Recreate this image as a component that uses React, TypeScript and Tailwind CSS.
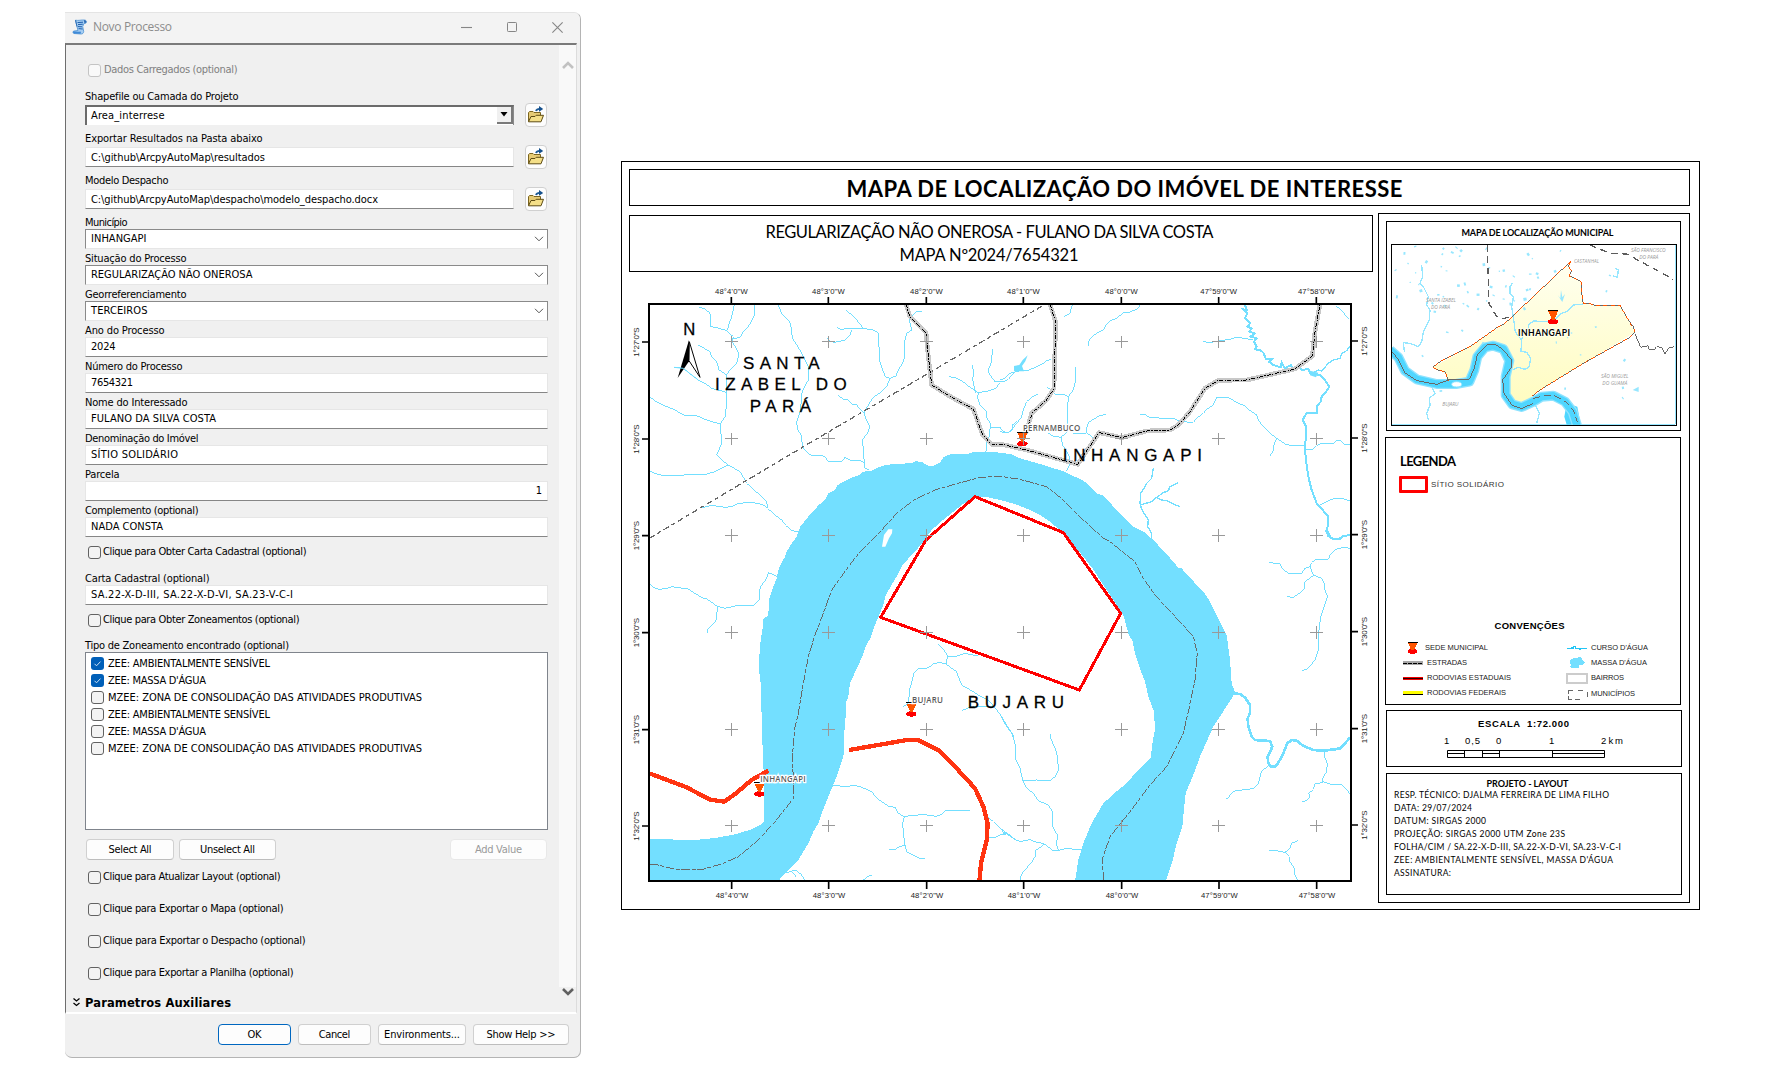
import { useLayoutEffect, useRef, useState } from "react";
import type { ReactNode } from "react";

const UI = "font-['DejaVu_Sans_Condensed','DejaVu_Sans',sans-serif]";
const CALIBRI = "font-['Lato',sans-serif]";
const ARIAL = "font-['Liberation_Sans',sans-serif]";

/* Single line of text whose tracking is adjusted so that it spans `w` pixels. */
function Fit({ w, children, className = "" }: { w: number; children: string; className?: string }) {
  const ref = useRef<HTMLSpanElement>(null);
  const [ls, setLs] = useState(0);
  useLayoutEffect(() => {
    const el = ref.current;
    if (!el) return;
    el.style.letterSpacing = "0px";
    el.style.marginRight = "0px";
    const natural = el.getBoundingClientRect().width;
    const next = children.length > 1 ? (w - natural) / (children.length - 1) : 0;
    el.style.letterSpacing = `${next}px`;
    el.style.marginRight = `${-next}px`;
    setLs(next);
  }, [w, children]);
  return (
    <span
      ref={ref}
      className={`inline-block shrink-0 whitespace-pre ${className}`}
      style={{ letterSpacing: `${ls}px`, marginRight: `${-ls}px` }}
    >
      {children}
    </span>
  );
}

/* ---------- Dialog ---------- */

function Box({ checked = false, disabled = false }: { checked?: boolean; disabled?: boolean }) {
  if (checked)
    return (
      <span className="flex size-[13px] shrink-0 items-center justify-center rounded-[3px] bg-[#005fb8]">
        <svg viewBox="0 0 13 13" className="size-[13px]" fill="none" stroke="#cfe2f5" strokeWidth="1">
          <path d="M3.5 6.8l2 2 4-4.2" />
        </svg>
      </span>
    );
  return (
    <span
      className={`size-[13px] shrink-0 rounded-[3px] border ${
        disabled ? "border-[#c4c4c4] bg-[#f9f9f9]" : "border-[#626262] bg-[#f3f3f3]"
      }`}
    />
  );
}

function CheckRow({ text, w, disabled = false }: { text: string; w: number; disabled?: boolean }) {
  return (
    <div className={`flex h-[18px] items-center pl-[3px] ${disabled ? "gap-[3px] text-[#808080]" : "gap-[2px]"}`}>
      <Box disabled={disabled} />
      <Fit w={w}>{text}</Fit>
    </div>
  );
}

function FolderButton() {
  return (
    <button className="mr-px flex h-[24px] w-[22px] items-center justify-center rounded-[4px] border border-[#d0d0d0] bg-[#fdfdfd]">
      <svg viewBox="0 0 18 18" className="size-[18px] shrink-0">
        <path d="M1.5 15.500V6.500l1.200-1h3.300l1 1h6.500v4" fill="#e6cb74" stroke="#7a6420" strokeWidth="1" />
        <path d="M1.500 15.800l2.500-5.300h4l1.200-1.200h7.300l-2.500 6.500z" fill="#f4df88" stroke="#5e4c14" strokeWidth="1" />
        <path d="M9 5c.5-1.500 1.500-2.200 3.500-2.200" fill="none" stroke="#1c5a96" strokeWidth="1.800" />
        <path d="M12 0l4.200 2.900L12 5.800z" fill="#15508c" />
      </svg>
    </button>
  );
}

function PathField({ label, lw, value, vw, combo = false }: { label: string; lw: number; value: string; vw: number; combo?: boolean }) {
  return (
    <div className="h-[42px]">
      <div className="flex h-[15px] items-center pt-[2px]">
        <Fit w={lw}>{label}</Fit>
      </div>
      <div className="flex h-[24px] items-center justify-between">
        {combo ? (
          <div className="flex h-[20px] w-[429px] items-center justify-between border-t-2 border-l-2 border-[#6b6b6b] border-r border-r-[#8a8a8a] bg-white pl-[4px]">
            <Fit w={vw}>{value}</Fit>
            <span className="flex h-[17px] w-[16px] items-center justify-center self-start border-r-2 border-b-2 border-[#7a7a7a] bg-[#f0f0f0]">
              <svg viewBox="0 0 8 5" className="h-[5px] w-[8px] shrink-0">
                <path d="M0.500 0h7L4 4.500z" />
              </svg>
            </span>
          </div>
        ) : (
          <div className="flex h-[20px] w-[429px] items-center border border-[#e6e6e6] border-b-[#868686] bg-white pt-px pl-[5px]">
            <Fit w={vw}>{value}</Fit>
          </div>
        )}
        <FolderButton />
      </div>
    </div>
  );
}

function Field({ label, lw, value, vw, kind = "text" }: { label: string; lw: number; value: string; vw: number; kind?: "text" | "combo" | "number" }) {
  return (
    <div className="h-[36px]">
      <div className="flex h-[14px] items-center pt-[2px]">
        <Fit w={lw}>{label}</Fit>
      </div>
      {kind === "combo" ? (
        <div className="flex h-[20px] items-center justify-between border border-[#8a8a8a] border-b-[#e6e6e6] bg-white pr-[3px] pb-px pl-[5px]">
          <Fit w={vw}>{value}</Fit>
          <svg viewBox="0 0 10 6" className="h-[6px] w-[10px]" fill="none" stroke="#555" strokeWidth="1">
            <path d="M1 0.800l4 4 4-4" />
          </svg>
        </div>
      ) : (
        <div
          className={`flex h-[20px] items-center border border-[#e6e6e6] border-b-[#868686] bg-white px-[5px] ${
            kind === "number" ? "justify-end" : ""
          }`}
        >
          <Fit w={vw}>{value}</Fit>
        </div>
      )}
    </div>
  );
}

function Btn({ text, w, className }: { text: string; w: number; className: string }) {
  return (
    <button className={`flex h-[21px] items-center justify-center rounded-[4px] border bg-[#fdfdfd] ${className}`}>
      <Fit w={w}>{text}</Fit>
    </button>
  );
}

const ZONES = [
  { text: "ZEE: AMBIENTALMENTE SENSÍVEL", w: 162, on: true },
  { text: "ZEE: MASSA D'ÁGUA", w: 98, on: true },
  { text: "MZEE: ZONA DE CONSOLIDAÇÃO DAS ATIVIDADES PRODUTIVAS", w: 314, on: false },
  { text: "ZEE: AMBIENTALMENTE SENSÍVEL", w: 162, on: false },
  { text: "ZEE: MASSA D'ÁGUA", w: 98, on: false },
  { text: "MZEE: ZONA DE CONSOLIDAÇÃO DAS ATIVIDADES PRODUTIVAS", w: 314, on: false },
];

function Dialog() {
  return (
    <div className={`mt-[12px] ml-[65px] flex h-[1046px] w-[516px] flex-col rounded-tr-[7px] rounded-b-[7px] border border-l-0 border-t-[#e4e4e4] border-[#b4b4b4] bg-[#f0f0f0] text-[11px] leading-[14px] text-black ${UI}`}>
      <div className="flex h-[30px] items-center rounded-tr-[6px] bg-[#f3f3f3] pb-[2px] pl-[7px]">
        <svg viewBox="0 0 16 16" className="size-[16px]">
          <path d="M3.500 1.200c3 .6 5.500-.4 9-.2 2 .2 2.800 2.300 1.200 3.200L12 4.500l-1.300 3 1 5c0 1.600-1.200 2.500-2.500 2.500L2 14.500c-1.500-.5-1.300-2.300 0-2.500l4-.5L4.800 7z" fill="#a5cdf2" stroke="#4a8fd0" strokeWidth=".8" />
          <path d="M5.500 3.600l5.500-.4M6 5.600l4.800-.4M6 7.600l4 .2M6.600 9.600l4 .4" stroke="#1d5fae" strokeWidth="1" />
          <path d="M1.500 12.300c2.500.5 5 .6 7 .2.800.8.500 1.900-.3 2.200l-6-.2C.8 14 .8 12.800 1.500 12.300z" fill="#3f8ad8" />
          <path d="M12 1c2.700.2 2.900 2.800.9 3.300-1-.8-.8-2-.9-3.300z" fill="#2e6db5" />
          <path d="M3.500 1.200L5 7.500" stroke="#2e6db5" strokeWidth="1" />
        </svg>
        <Fit w={79} className="ml-[5px] font-['Open_Sans',sans-serif] text-[12px] text-[#8c8c8c]">
          Novo Processo
        </Fit>
        <div className="ml-auto flex items-center gap-[35px] pr-[17px] text-[#868686]">
          <svg viewBox="0 0 10 10" className="size-[11px]" fill="none" stroke="currentColor"><path d="M0 5h10" /></svg>
          <svg viewBox="0 0 10 10" className="size-[10px]" fill="none" stroke="currentColor"><rect x=".5" y=".5" width="9" height="9" rx=".8" /></svg>
          <svg viewBox="0 0 10 10" className="size-[11px]" fill="none" stroke="currentColor"><path d="M.3.300l9.400 9.400M9.700.300L.3 9.700" /></svg>
        </div>
      </div>
      <div className="mr-[3px] flex h-[971px] border-t-2 border-b-2 border-l border-t-[#7a7a7a] border-b-white border-l-[#6e6e6e] border-r border-r-[#dcdcdc]">
        <div className="flex w-[493px] flex-col pr-[11px] pl-[19px]">
          <div className="mt-[16px]">
            <CheckRow text="Dados Carregados (optional)" w={133.500} disabled />
          </div>
          <div className="mt-[9px] mb-px">
            <PathField label="Shapefile ou Camada do Projeto" lw={153.500} value="Area_interrese" vw={73.500} combo />
            <PathField label="Exportar Resultados na Pasta abaixo" lw={177.500} value="C:\github\ArcpyAutoMap\resultados" vw={174} />
            <PathField label="Modelo Despacho" lw={83.500} value="C:\github\ArcpyAutoMap\despacho\modelo_despacho.docx" vw={287} />
          </div>
          <Field label="Município" lw={42.500} value="INHANGAPI" vw={55.500} kind="combo" />
          <Field label="Situação do Processo" lw={101.500} value="REGULARIZAÇÃO NÃO ONEROSA" vw={161.500} kind="combo" />
          <Field label="Georreferenciamento" lw={101.500} value="TERCEIROS" vw={56.500} kind="combo" />
          <Field label="Ano do Processo" lw={79.500} value="2024" vw={24.500} />
          <Field label="Número do Processo" lw={97.500} value="7654321" vw={42} />
          <Field label="Nome do Interessado" lw={102.500} value="FULANO DA SILVA COSTA" vw={125} />
          <Field label="Denominação do Imóvel" lw={113.500} value="SÍTIO SOLIDÁRIO" vw={87} />
          <Field label="Parcela" lw={34.500} value="1" vw={6} kind="number" />
          <Field label="Complemento (optional)" lw={113.500} value="NADA CONSTA" vw={72} />
          <div className="mt-[4px]">
            <CheckRow text="Clique para Obter Carta Cadastral (optional)" w={203.500} />
          </div>
          <div className="mt-[10px]">
            <Field label="Carta Cadastral (optional)" lw={124.500} value="SA.22-X-D-III, SA.22-X-D-VI, SA.23-V-C-I" vw={202} />
          </div>
          <div className="mt-[4px]">
            <CheckRow text="Clique para Obter Zoneamentos (optional)" w={196.500} />
          </div>
          <div className="mt-[10px] flex h-[13px] items-center pt-px">
            <Fit w={204}>Tipo de Zoneamento encontrado (optional)</Fit>
          </div>
          <div className="h-[178px] border border-[#7f848c] bg-white pt-[2px] pl-[5px]">
            {ZONES.map((z, i) => (
              <div key={i} className="flex h-[17px] items-center gap-[4px]">
                <Box checked={z.on} />
                <Fit w={z.w}>{z.text}</Fit>
              </div>
            ))}
          </div>
          <div className="mt-[9px] flex px-px">
            <Btn text="Select All" w={43} className="w-[88px] border-[#d0d0d0] border-b-[#bdbdbd]" />
            <Btn text="Unselect All" w={55} className="ml-[5px] w-[97px] border-[#d0d0d0] border-b-[#bdbdbd]" />
            <Btn text="Add Value" w={47} className="ml-auto w-[97px] border-[#e8e8e8] text-[#9a9a9a]" />
          </div>
          <div className="mt-[8px] flex flex-col gap-[14px]">
            <CheckRow text="Clique para Atualizar Layout (optional)" w={177.500} />
            <CheckRow text="Clique para Exportar o Mapa (optional)" w={180.500} />
            <CheckRow text="Clique para Exportar o Despacho (optional)" w={202.500} />
            <CheckRow text="Clique para Exportar a Planilha (optional)" w={190.500} />
          </div>
          <div className="mt-[14px] -ml-[13px] flex items-center gap-[4px]">
            <svg viewBox="0 0 9 10" className="h-[10px] w-[9px]" fill="none" stroke="#000" strokeWidth="1.300">
              <path d="M1.500 0.500l3 2.500 3-2.500M1.500 5l3 2.500 3-2.500" />
            </svg>
            <Fit w={146} className="font-['DejaVu_Sans',sans-serif] text-[11.5px] font-bold">
              Parametros Auxiliares
            </Fit>
          </div>
        </div>
        <div className="flex h-[942px] w-[17px] flex-col items-center justify-between bg-[#f9f9f9]">
          <svg viewBox="0 0 12 9" className="mt-[15px] h-[9px] w-[12px]" fill="none" stroke="#c2c2c2" strokeWidth="2.600">
            <path d="M1 8l5-5 5 5" />
          </svg>
          <svg viewBox="0 0 12 9" className="-mb-[10px] h-[9px] w-[12px]" fill="none" stroke="#606060" strokeWidth="2.600">
            <path d="M1 1l5 5 5-5" />
          </svg>
        </div>
      </div>
      <div className="mt-[10px] flex justify-end pr-[11px]">
        <Btn text="OK" w={14} className="w-[73px] border-[#0067c0]" />
        <Btn text="Cancel" w={31.500} className="ml-[7px] w-[73px] border-[#d0d0d0] border-b-[#bdbdbd]" />
        <Btn text="Environments..." w={76} className="ml-[7px] w-[88px] border-[#d0d0d0] border-b-[#bdbdbd]" />
        <Btn text="Show Help >>" w={69} className="ml-[7px] w-[96px] border-[#d0d0d0] border-b-[#bdbdbd]" />
      </div>
    </div>
  );
}

/* ---------- Main map ---------- */

const WATER = "#73dfff";

const STREAMS_NW = [
  "252,472 270,476 285,490 288,530 310,534 335,542 355,560 352,575 362,592 372,610 365,640 345,660 335,675",
  "358,465 350,500 343,520 337,540",
  "418,465 417,500 400,530 385,545 375,562 355,567",
  "250,585 285,605 290,620 305,635 312,660 335,675 335,725 334,770 330,800 316,822 318,850 320,880 305,915 320,930 340,945 375,965 387,985 395,1000 415,1018 440,1040 455,1055 458,1075 480,1095 500,1110 512,1126 530,1142 552,1145",
  "178,652 205,655 230,675 250,690 270,700 290,715 335,727",
  "103,740 125,756 160,772 180,780 205,795 245,797 265,806 290,815 316,822",
  "103,962 125,972 150,978 200,976 230,972 265,975 300,965 340,945",
  "262,1073 290,1066 330,1072 350,1070 370,1060 410,1057 440,1063 458,1073",
  "490,465 500,490 515,505 527,520 530,550 535,570 550,592 560,610 575,640 580,650 580,690 568,712 560,730 557,780 545,815 547,835 560,860 562,890 575,905 590,918 615,916 630,920 640,935 680,935 690,922 710,933 735,932 748,938 750,955 762,960",
  "693,480 710,495 725,510 745,535 775,540 790,548 790,575 793,600 795,635 803,660 812,682 825,685 843,678 850,660 862,640 870,620 870,570 875,550 890,540 882,505 905,485 920,484",
  "665,530 675,538 700,536 745,535",
  "637,565 645,574 660,577 690,570 705,555 710,540",
  "825,685 815,710 800,725 780,738 765,755 747,790 755,812 765,830 757,850 743,868 745,910 750,955",
  "670,737 685,748 700,750 710,762 725,765 747,790",
  "1003,680 1022,684 1040,692 1060,708 1090,728",
  "1073,645 1075,670 1073,690 1082,728",
  "1132,598 1130,635 1122,655 1122,670 1140,695 1165,695 1180,688 1200,665",
  "1090,728 1115,724 1140,716 1155,700",
  "1090,728 1088,745 1095,765 1115,785 1113,800 1127,822 1122,860 1115,880 1113,905",
  "1127,832 1155,832 1165,845 1180,848 1192,840 1192,825 1205,815",
];
const STREAMS_NE = [
  "0,690 15,685 30,670 60,662 80,662 100,655 130,640 140,632 152,628",
  "0,845 20,848 30,845 50,820 65,800 70,780 80,755 95,742 113,732",
  "140,710 155,722 165,733 190,733 205,740 220,720 225,700 227,652",
  "205,740 202,790 202,845 183,862 188,885 200,905 210,925 208,945 200,962",
  "318,793 300,797 285,805 265,818 260,835 258,848 270,855 285,868",
  "145,850 160,858 183,862",
  "218,850 235,852 258,850",
  "218,465 212,478 210,490 193,500",
  "420,465 412,478 400,482 385,488 370,488 350,505 330,512 318,525 310,540 290,550 275,560 265,575 265,587",
  "610,575 630,578 660,572 690,568 710,562 740,566 760,570",
  "1008,468 1030,485 1035,496 1048,508",
  "420,793 435,793 450,803 500,805 520,805 540,815 580,817 590,805 610,790 620,778 640,765 650,742 685,743 710,757 735,768 748,780 770,795 775,810 785,825 805,845 830,865 855,882 880,888 915,888",
  "830,865 822,885 822,900 810,917",
  "915,898 940,897 950,887 960,882 1000,882 1008,872 1020,870 1035,885 1050,885",
  "955,1068 975,1058 990,1050 1000,1047 1025,1045 1050,1053",
];
const STREAMS_NE_WIDE = [
  "940,668 955,660 965,663 985,640 1000,630 1020,625 1025,610 1040,602 1050,588",
  "460,955 455,985 440,1000 430,1018 422,1030 420,1060 425,1078 445,1110 443,1130 455,1150 455,1165",
  "535,998 510,1010 505,1022 490,1028 470,1042 455,1055 420,1065",
  "470,1042 485,1050 500,1052 520,1062 540,1070",
];
const RIVER_NE =
  "735,465 740,480 730,478 742,490 735,505 750,520 742,530 755,535 748,545 764,550 752,560 770,565 762,575 770,590 765,598 780,600 790,608 798,628 815,628 808,636 820,645 842,652 845,638 855,655 872,645 880,658 895,650 905,660 925,657 930,668 945,672 960,675 975,690 988,710 978,725 965,740 962,755 950,770 950,790 920,788 908,810 918,830 918,850 915,900 918,930 925,980 935,1020 950,1060 968,1080 985,1100 983,1130 980,1140 990,1160 1000,1168 1015,1168 1030,1158 1050,1155";
const STREAMS_SE = [
  "807,98 840,101 848,118 870,132 905,130 915,115 930,110 935,98 945,90 985,88 992,72 1010,57 1030,52 1050,55",
  "930,110 940,135 965,145 973,160 975,180 983,200 972,230 962,260 957,300 955,360 945,390 925,415 907,422",
  "940,137 915,155 913,175 905,185 880,202 862,200",
  "803,710 785,722 780,740 775,762 760,775 745,778 705,782 690,795 685,805 677,805",
  "973,665 975,685 982,700 980,725 968,745 968,755 990,762 1025,765 1040,778 1050,793",
  "968,757 945,762 940,778 927,790 928,805 918,812 907,815",
  "807,962 830,962 855,967 870,955 875,940 893,932",
  "855,967 868,980 870,995 883,1015 885,1035 895,1053",
  "0,553 20,585 38,612 47,650 48,690 60,715 68,750 80,775 100,790 115,812 145,825 157,845 158,890 172,915 170,945 175,960",
  "68,752 110,750 150,753 165,740 175,722 173,680 165,655 152,625 152,612",
  "0,895 25,912 50,932 65,934 90,929 110,937 130,940 160,962 180,960 200,955 243,960",
  "130,942 125,950 108,960 105,980 95,997 70,1025 62,1040 60,1053",
  "0,915 18,912 5,902",
  "450,0 455,10 455,22",
];
const RIVER_SE_A = "700,490 720,492 735,503 750,525 750,550 743,565 745,590 755,620 765,630 790,632 810,633 817,650 808,670 803,680 805,700 812,710 825,710 835,698 850,670 862,640 875,630 890,632 910,648 940,660 970,662 1005,658";
const RIVER_SE_B = "1000,659 1020,655 1035,640 1050,623";
const STREAMS_SW = [
  "103,160 115,172 130,178 155,176 170,170 220,177 240,190 260,203 275,206 305,228 330,235 360,228 415,228 433,208 433,180 440,165 455,145 460,128 472,132 485,140",
  "307,228 305,265 298,280 285,290 277,300 277,310",
  "970,343 985,358 998,378 1020,380 1050,370 1090,378",
  "998,378 993,402 975,398 955,400 945,410 930,417 908,417 897,430 885,475 880,520 865,530",
  "993,402 1010,415 1025,425 1032,445 1040,465 1070,482 1090,495 1120,510 1145,540 1160,560 1170,582 1190,610 1200,640",
  "1135,528 1110,530 1085,530 1065,532 1040,542",
  "650,765 690,770 720,766 740,772 770,785 785,805 800,815 820,828 840,832 850,850 868,860 890,856 930,854 965,859 980,853 990,842 1030,841 1065,843",
  "868,860 863,880 865,910 870,945 850,952 840,960 823,960",
  "870,945 875,965 895,975 915,985 930,985",
  "1120,862 1135,875 1150,890 1175,910 1160,913 1140,922 1120,922",
  "1165,900 1180,915 1200,928",
  "512,1027 530,1025 545,1042",
  "530,1020 545,1022 560,1035 570,1053",
  "742,1053 755,1042 770,1035",
];

const RIVER =
  "M103,2067 150,2068 240,2070 300,2064 360,2053 410,2038 440,2023 447,2015 447,1890 443,1800 440,1700 437,1600 432,1560 433,1520 437,1470 442,1440 445,1430 445,1408 460,1395 462,1350 475,1310 485,1285 490,1260 497,1245 510,1220 515,1205 530,1180 545,1160 552,1140 557,1128 580,1100 600,1080 608,1068 630,1050 640,1030 660,1020 668,1005 690,993 705,985 735,975 745,965 770,962 790,952 810,945 850,941 890,940 900,934 920,935 940,948 955,948 975,938 985,922 1010,911 1060,911 1080,905 1110,905 1155,908 1190,913 1215,925 1250,935 1295,948 1345,964 1390,985 1405,992 1430,1013 1445,1030 1465,1037 1505,1080 1555,1130 1590,1148 1615,1170 1680,1240 1687,1252 1700,1255 1712,1270 1765,1325 1785,1355 1835,1455 1845,1530 1850,1600 1860,1627 1850,1645 1805,1715 1795,1730 1755,1820 1737,1870 1712,1930 1706,1985 1703,2025 1685,2080 1672,2135 1652,2195 1380,2195 1390,2130 1405,2080 1430,2020 1465,1960 1500,1928 1535,1900 1565,1865 1607,1823 1613,1775 1620,1740 1617,1685 1600,1640 1590,1595 1580,1570 1560,1510 1553,1475 1540,1450 1525,1395 1495,1350 1455,1290 1440,1265 1405,1220 1345,1150 1305,1115 1280,1098 1245,1080 1200,1062 1155,1050 1120,1042 1080,1040 1040,1065 990,1105 950,1140 925,1175 900,1205 862,1245 850,1270 830,1305 812,1335 805,1365 780,1425 768,1460 750,1495 742,1520 730,1545 705,1600 700,1640 692,1660 692,1700 687,1760 687,1812 675,1850 665,1880 640,1940 622,1985 610,2020 595,2045 580,2080 550,2130 515,2165 488,2195 103,2195Z";
const CENTER =
  "105,2143 130,2145 180,2158 255,2160 320,2142 370,2120 430,2070 480,2015 520,1965 535,1945 535,1890 532,1820 540,1730 550,1690 565,1600 580,1520 600,1455 625,1390 650,1320 700,1250 735,1205 770,1170 800,1140 850,1085 900,1048 960,1020 1030,1000 1090,983 1150,978 1215,988 1295,1010 1345,1050 1405,1110 1465,1165 1485,1175 1560,1235 1585,1285 1620,1335 1685,1405 1735,1460 1747,1505 1740,1590 1725,1660 1705,1750 1655,1850 1605,1905 1545,1985 1485,2060 1463,2125 1465,2193";
const ROADS = [
  "873,463 885,500 933,548 940,620 950,705 1010,742 1075,777 1103,855 1130,883 1165,884 1235,900 1388,943 1452,848 1520,863 1595,843 1665,840 1690,825 1725,785 1770,715 1810,691 1895,690 2040,657 2092,618 2100,545 2115,463",
  "1305,463 1322,515 1317,715 1295,750 1250,790 1233,850",
];
const HIGHWAYS = [
  "100,1869 215,1912 285,1949 328,1955 360,1932 410,1890 460,1862",
  "702,1800 790,1785 870,1771 910,1771 970,1800 1020,1850 1080,1915 1105,1970 1118,2020 1115,2070 1098,2140 1093,2196",
];
const LONS = ["48°4'0\"W", "48°3'0\"W", "48°2'0\"W", "48°1'0\"W", "48°0'0\"W", "47°59'0\"W", "47°58'0\"W"];
const LATS = ["1°27'0\"S", "1°28'0\"S", "1°29'0\"S", "1°30'0\"S", "1°31'0\"S", "1°32'0\"S"];
const GX = [349, 640, 934, 1225, 1519, 1811, 2104];
const GY = [576, 867, 1157, 1448, 1739, 2028];

function Lines({ pts, width = 3, color = WATER }: { pts: string[]; width?: number; color?: string }) {
  return (
    <g fill="none" stroke={color} strokeWidth={width} shapeRendering="crispEdges">
      {pts.map((p) => (
        <polyline key={p} points={p} />
      ))}
    </g>
  );
}

function Pin({ x, y }: { x: number; y: number }) {
  return (
    <g transform={`translate(${x} ${y})`} shapeRendering="crispEdges">
      <ellipse cx="0" cy="13" rx="16" ry="8" fill="#f00" />
      <path d="M-14,-18H15L4,8H-3Z" fill="#ff5500" />
      <path d="M-15,-20H16" stroke="#000" strokeWidth="3" />
    </g>
  );
}

function T({ x, y, w, size, children, className = "", anchor = "start", fill = "#000" }: { x: number; y: number; w: number; size: number; children: ReactNode; className?: string; anchor?: "start" | "middle"; fill?: string }) {
  return (
    <text x={x} y={y} textLength={w} fontSize={size} textAnchor={anchor} fill={fill} className={className}>
      {children}
    </text>
  );
}

function MainMap() {
  return (
    <svg viewBox="629 272 745 637" className="block h-[637px] w-[745px]">
      <clipPath id="frame">
        <rect x="103" y="463" width="2105" height="1731" />
      </clipPath>
      <g transform="translate(615 150) scale(.333333)">
        <g clipPath="url(#frame)">
          <Lines pts={STREAMS_NW} />
          <g transform="translate(1155 0)">
            <Lines pts={STREAMS_NE} />
            <Lines pts={STREAMS_NE_WIDE} width={4} />
            <Lines pts={[RIVER_NE]} width={6} />
            <path d="M42,648 58,645 68,630 83,616 76,634 66,648 72,664 42,664Z" fill={WATER} />
            <path d="M930,662 955,668 948,682 930,676Z" fill={WATER} />
          </g>
          <g transform="translate(0 1140)">
            <Lines pts={STREAMS_SW} />
          </g>
          <g transform="translate(1155 1140)">
            <Lines pts={STREAMS_SE} />
            <Lines pts={["978,0 985,18 1000,28 1020,26 1030,18 1050,15"]} width={6} />
            <Lines pts={[RIVER_SE_A]} width={8} />
            <Lines pts={[RIVER_SE_B]} width={8} />
          </g>
          <path d={RIVER} fill={WATER} shapeRendering="crispEdges" />
          <path d="M801,1190 807,1155 820,1138 832,1138 831,1150 822,1165 811,1190Z" fill="#fff" />
          <polyline points={CENTER} fill="none" stroke="#686868" strokeWidth="3" strokeDasharray="26 5 12 5" shapeRendering="crispEdges" />
          <path d="M103,1165L560,893L935,673L1290,463" fill="none" stroke="#686868" strokeWidth="4" strokeDasharray="18 10 12 10" shapeRendering="crispEdges" />
          <Lines pts={ROADS} width={14} color="#c8c8c8" />
          <g fill="none" stroke="#000" strokeWidth="3" strokeDasharray="12 4 4 4" shapeRendering="crispEdges">
            {ROADS.map((p) => (
              <polyline key={p} points={p} />
            ))}
          </g>
          <Lines pts={HIGHWAYS} width={13} color="#ff3411" />
          <path d="M1080,1040 1345,1148 1517,1390 1393,1620 797,1402 933,1170Z" fill="none" stroke="#f00" strokeWidth="9" strokeLinejoin="round" shapeRendering="crispEdges" />
          <g className="font-['Liberation_Sans',sans-serif]" stroke="#000" strokeWidth="0.800">
            <T x={384} y={656} w={230} size={51}>SANTA</T>
            <T x={300} y={719} w={395} size={51}>IZABEL DO</T>
            <T x={404} y={785} w={184} size={51}>PARÁ</T>
            <T x={1343} y={933} w={418} size={51}>INHANGAPI</T>
            <T x={1058} y={1673} w={289} size={51}>BUJARU</T>
            <T x={205} y={555} w={34} size={50}>N</T>
          </g>
          <path d="M222,570L188,684L222,634Z" fill="#000" />
          <path d="M223,575L255,682L222,632Z" fill="#fff" stroke="#000" strokeWidth="3" />
          <polyline points="178,652 205,655 230,675 250,690" fill="none" stroke={WATER} strokeWidth="3" />
          <Pin x={1222} y={868} />
          <Pin x={889} y={1679} />
          <Pin x={433} y={1919} />
          <g className="font-['Open_Sans',sans-serif] font-semibold" stroke="#fff" strokeWidth="7" style={{ paintOrder: "stroke" }}>
            <T x={1224} y={843} w={172} size={24} fill="#5a5a5a">PERNAMBUCO</T>
            <T x={891} y={1659} w={93} size={24} fill="#5a5a5a">BUJARU</T>
            <T x={436} y={1897} w={136} size={24} fill="#5a5a5a">INHANGAPI</T>
          </g>
          <g stroke="#999" strokeWidth="3" shapeRendering="crispEdges">
            {GX.flatMap((x) => GY.map((y) => <path key={`${x}-${y}`} d={`M${x - 19},${y}h38M${x},${y - 19}v38`} />))}
          </g>
        </g>
        <rect x="103" y="463" width="2105" height="1731" fill="none" stroke="#000" strokeWidth="6" shapeRendering="crispEdges" />
        <g stroke="#000" strokeWidth="5">
          {GX.map((x) => (
            <path key={x} d={`M${x},441v22M${x + 1},2194v23`} />
          ))}
          {GY.map((y) => (
            <path key={y} d={`M81,${y}h22M2208,${y - 3}h21`} />
          ))}
        </g>
        <g className="font-['Liberation_Sans',sans-serif]">
          {GX.map((x, i) => (
            <g key={x}>
              <T x={x} y={431} w={i > 4 ? 110 : 98} size={23} anchor="middle" fill="#222">{LONS[i]}</T>
              <T x={x + 2} y={2243} w={i > 4 ? 110 : 98} size={23} anchor="middle" fill="#222">{LONS[i]}</T>
            </g>
          ))}
          {GY.map((y, i) => (
            <g key={y}>
              <g transform={`translate(72 ${y}) rotate(-90)`}>
                <T x={0} y={0} w={88} size={24} anchor="middle" fill="#222">{LATS[i]}</T>
              </g>
              <g transform={`translate(2256 ${y - 3}) rotate(-90)`}>
                <T x={0} y={0} w={88} size={24} anchor="middle" fill="#222">{LATS[i]}</T>
              </g>
            </g>
          ))}
        </g>
      </g>
    </svg>
  );
}

/* ---------- Location map ---------- */

const SPECKS = (() => {
  let s = 77;
  const next = () => (s = (s * 1103515245 + 12345) % 2147483648) / 2147483648;
  return Array.from({ length: 72 }, (_, i) => {
    const a = next();
    const b = next();
    const c = next();
    const d = next();
    return i < 46
      ? { x: 70 + a * 440, y: 290 + b * 190, w: 3 + c * 7, h: 3 + d * 6 }
      : { x: 70 + a * 830, y: 300 + b * 510, w: 3 + c * 5, h: 3 + d * 5 };
  });
})();
const LAND = "M603,333 598,375 633,395 640,460 680,467 750,466 795,547 510,720 485,740 475,770 430,765 405,730 405,680 422,640 405,600 370,583 335,600 322,640 305,690 235,692 225,668 188,652 300,590 405,520Z";
const MINI_RIVER = "60,600 85,622 105,662 140,688 200,702 258,702 298,695 313,660 322,620 345,592 370,587 400,597 418,632 407,680 407,735 427,763 455,771 490,755 515,740 550,737 585,755 608,785 622,830";
const MINI_EDGE = [
  "603,333 595,350 605,362 598,378 630,392 635,400 633,415 640,462 655,460 680,467 750,466 775,510 790,530 795,547 780,562 640,640 510,720 485,740",
  "603,333 405,520 385,530 300,590 210,635 188,652 205,660 225,665 235,692",
];

function MiniMap() {
  return (
    <svg viewBox="1392 245 284 180" className="h-[182px] w-[286px] border border-black" preserveAspectRatio="none">
      <defs>
        <linearGradient id="land" x1="0" y1="0" x2="0" y2="1">
          <stop offset="0" stopColor="#fffff0" />
          <stop offset="1" stopColor="#fffcbf" />
        </linearGradient>
      </defs>
      <g transform="translate(1370 150) scale(.333333)">
        <path d={LAND} fill="url(#land)" />
        {SPECKS.map((p, i) => (
          <rect key={i} x={p.x} y={p.y} width={p.w} height={p.h} fill="#97e7ff" transform={`rotate(${i * 37} ${p.x} ${p.y})`} />
        ))}
        <Lines
          color="#97e7ff"
          width={4}
          pts={[
            "427,400 420,410 420,430 430,440 425,470 430,500 435,540 440,552 455,570 453,603 470,607 482,625 478,650 465,658 445,652 430,658",
            "640,462 610,465 590,485 570,492 560,505 530,515 490,513 475,525 475,540 460,552 455,570",
            "155,345 158,380 150,400 160,410 175,440 170,465 180,480 178,510 160,545 155,575 145,590 120,580 100,578 103,605",
            "185,710 195,730 178,745 180,765 170,790 175,810",
            "495,765 508,790 500,820",
            "66,823 915,823",
            "916,285 916,823",
            "735,355 745,360 742,382 730,378",
          ]}
        />
        <path d="M563,435l8,10 2-25 4,22 8-10-8,24z M788,720l18-10v16z" fill="#97e7ff" />
        <path d="M590,760L622,770L632,824H590L583,800Z" fill="#4fd6ff" />
        <polyline points={MINI_RIVER} fill="none" stroke="#8fe3ff" strokeWidth="30" strokeLinejoin="round" />
        <polyline points={MINI_RIVER} fill="none" stroke="#4fd6ff" strokeWidth="22" strokeLinejoin="round" />
        <ellipse cx="260" cy="703" rx="15" ry="8" fill="#fff" stroke="#8fe3ff" strokeWidth="3" />
        <polyline points="66,605 85,628 105,668 140,692 200,703 235,690 298,688 313,655 322,615 350,585 375,582 400,600 425,630 425,650 398,690 402,730 425,765 455,776 490,760" fill="none" stroke="#686868" strokeWidth="3" shapeRendering="crispEdges" />
        <polyline points="490,745 520,738 550,735 590,757 612,785 622,815" fill="none" stroke="#686868" strokeWidth="3" strokeDasharray="22 10" shapeRendering="crispEdges" />
        <Lines color="#686868" width={3} pts={MINI_EDGE} />
        <g fill="none" stroke="#ff5500" strokeWidth="3" strokeDasharray="12 10" shapeRendering="crispEdges">
          {MINI_EDGE.map((p) => (
            <polyline key={p} points={p} />
          ))}
        </g>
        <g fill="none" stroke="#5c5c5c" strokeWidth="4" strokeDasharray="20 14" shapeRendering="crispEdges">
          <polyline points="352,285 357,460 380,500 400,506 427,498" />
          <polyline points="660,285 720,310 770,312 910,388" />
        </g>
        <polyline points="795,552 812,592 835,587 838,600 852,600 860,590 875,592 885,612 895,595 912,590" fill="none" stroke="#686868" strokeWidth="3" shapeRendering="crispEdges" />
        <Pin x={549} y={502} />
        <g className="font-['Open_Sans',sans-serif] italic">
          <T x={783} y={305} w={104} size={15} fill="#999">SÃO FRANCISCO</T>
          <T x={808} y={327} w={57} size={15} fill="#999">DO PARÁ</T>
          <T x={612} y={339} w={75} size={14} fill="#999">CASTANHAL</T>
          <T x={168} y={456} w={90} size={15} fill="#999">SANTA IZABEL</T>
          <T x={183} y={477} w={57} size={15} fill="#999">DO PARÁ</T>
          <T x={693} y={684} w={82} size={15} fill="#999">SÃO MIGUEL</T>
          <T x={697} y={705} w={75} size={15} fill="#999">DO GUAMÁ</T>
          <T x={217} y={768} w={48} size={15} fill="#999">BUJARU</T>
        </g>
        <g className="font-['Lato',sans-serif] font-bold" stroke="#fffff0" strokeWidth="5" style={{ paintOrder: "stroke" }}>
          <T x={444} y={558} w={156} size={26}>INHANGAPI</T>
        </g>
      </g>
    </svg>
  );
}

/* ---------- Legend ---------- */

function LegendRow({ icon, text, w, textClass = "" }: { icon: ReactNode; text: string; w: number; textClass?: string }) {
  return (
    <div className="flex h-[15px] items-center">
      <svg viewBox="0 0 22 14" className="h-[14px] w-[22px] shrink-0 overflow-visible" shapeRendering="crispEdges">
        {icon}
      </svg>
      <Fit w={w} className={textClass}>{text}</Fit>
    </div>
  );
}

function Legend() {
  return (
    <div className="mt-[6px] -ml-px h-[268px] w-[296px] border border-black">
      <div className={`flex h-[31px] pt-[15px] pl-[14px] text-[13px] leading-[16px] font-bold ${CALIBRI}`}>
        <Fit w={56}>LEGENDA</Fit>
      </div>
      <div className={`mt-[7px] ml-[13px] flex items-center gap-[3px] text-[8px] leading-[10px] text-[#333] ${ARIAL}`}>
        <span className="h-[17px] w-[29px] rounded-[1px] border-[3px] border-[#f00]" />
        <Fit w={73}>SÍTIO SOLIDÁRIO</Fit>
      </div>
      <div className={`mt-[127px] ml-[-7px] flex justify-center text-[9.5px] leading-[12px] font-bold ${ARIAL}`}>
        <Fit w={70}>CONVENÇÕES</Fit>
      </div>
      <div className={`mt-[8px] flex text-[7.5px] leading-[10px] text-[#222] ${ARIAL}`}>
        <div className="w-[165px] pl-[16px]">
          <LegendRow
            text="SEDE MUNICIPAL"
            w={63}
            textClass="ml-[1px]"
            icon={<g transform="translate(10.500 6.500) scale(.28)"><ellipse cy="14" rx="16" ry="9" fill="#f00" /><path d="M-16,-16H17L6,9H-5Z" fill="#ff5500" /><path d="M-17,-19H18" stroke="#000" strokeWidth="4" /></g>}
          />
          <LegendRow
            text="ESTRADAS"
            w={40}
            textClass="ml-[3px]"
            icon={<><path d="M1 7h20" stroke="#a8a8a8" strokeWidth="4" /><path d="M1 7.500h20" stroke="#000" strokeWidth="1" strokeDasharray="4 1" /></>}
          />
          <LegendRow
            text="RODOVIAS ESTADUAIS"
            w={84}
            textClass="ml-[3px]"
            icon={<><path d="M1 7.500h20" stroke="#f00000" strokeWidth="3" /><path d="M1 7.500h20" stroke="#200" strokeWidth="1" /></>}
          />
          <LegendRow
            text="RODOVIAS FEDERAIS"
            w={79}
            textClass="ml-[3px]"
            icon={<><path d="M1 6.500h20" stroke="#ff0" strokeWidth="3" /><path d="M1 8.500h20" stroke="#000" strokeWidth="1" /></>}
          />
        </div>
        <div className="pl-[16px]">
          <LegendRow
            text="CURSO D'ÁGUA"
            w={57}
            textClass="ml-[2px]"
            icon={<path d="M0 7.500h4l1-1 1 1 1-2h1v2h4l1 1 1-1h6" fill="none" stroke="#22c5f5" strokeWidth="1" />}
          />
          <LegendRow
            text="MASSA D'ÁGUA"
            w={56}
            textClass="ml-[2px]"
            icon={<path d="M3 4l4-2 2 .5 3-1.500 3 1v2l3 2-2 3-4 .5v2l-5 0-3 1-1-2 1-1-1-3z" fill={WATER} />}
          />
          <LegendRow text="BAIRROS" w={33} textClass="ml-[2px]" icon={<rect x="0" y="3" width="20" height="9" fill="#fff" stroke="#ccc" strokeWidth="2" />} />
          <LegendRow
            text="MUNICÍPIOS"
            w={44}
            textClass="mt-[2px] ml-[2px]"
            icon={<path d="M5.500 4.500H1.500v3M1.500 10v3.500h3M8 13.500h5M11 4.500h5M20.500 6v5" fill="none" stroke="#666" strokeWidth="1" />}
          />
        </div>
      </div>
    </div>
  );
}

const INFO = [
  { t: "RESP. TÉCNICO: DJALMA FERREIRA DE LIMA FILHO", w: 215 },
  { t: "DATA: 29/07/2024", w: 78 },
  { t: "DATUM: SIRGAS 2000", w: 92 },
  { t: "PROJEÇÃO: SIRGAS 2000 UTM Zone 23S", w: 171 },
  { t: "FOLHA/CIM / SA.22-X-D-III, SA.22-X-D-VI, SA.23-V-C-I", w: 227 },
  { t: "ZEE: AMBIENTALMENTE SENSÍVEL, MASSA D'ÁGUA", w: 219 },
  { t: "ASSINATURA:", w: 57 },
];

function SideColumn() {
  return (
    <div className="mt-[-2px] ml-auto h-[690px] w-[312px] border border-black pt-[7px] pl-[7px]">
      <div className="flex h-[210px] w-[295px] flex-col items-center border border-black">
        <div className={`mt-[4px] flex h-[13px] items-center pl-[8px] text-[9px] font-bold ${CALIBRI}`}>
          <Fit w={152}>MAPA DE LOCALIZAÇÃO MUNICIPAL</Fit>
        </div>
        <div className="mt-[5px] pl-px">
          <MiniMap />
        </div>
      </div>
      <Legend />
      <div className="mt-[5px] h-[57px] w-[296px] border border-black">
        <svg viewBox="1387 711 294 55" className="block h-[55px] w-[294px]">
          <g className="font-['Liberation_Sans',sans-serif]">
            <text x="1478" y="727" textLength="91" fontSize="9.5" fontWeight="700" xmlSpace="preserve">ESCALA  1:72.000</text>
            <g fontSize="9.500">
              <text x="1444" y="744">1</text>
              <text x="1465" y="744" textLength="15">0,5</text>
              <text x="1496" y="744">0</text>
              <text x="1549" y="744">1</text>
              <text x="1601" y="744">2</text>
              <text x="1608.500" y="744" textLength="14.500">km</text>
            </g>
          </g>
          <path d="M1447.500 750.500h157v7h-157zM1464.500 750.500v7M1482.500 750.500v7M1499.500 750.500v7M1552.500 750.500v7M1447.500 753.500h17M1482.500 753.500h17M1552.500 753.500h52" fill="none" stroke="#000" strokeWidth="1" />
        </svg>
      </div>
      <div className={`mt-[6px] h-[122px] w-[296px] border border-black pt-[3px] pl-[7px] text-[8.5px] leading-[13px] ${CALIBRI}`}>
        <div className="flex h-[12px] items-center justify-center pr-[20px] text-[9px] font-bold">
          <Fit w={82}>PROJETO - LAYOUT</Fit>
        </div>
        {INFO.map((l) => (
          <div key={l.t} className="flex h-[13px] items-center">
            <Fit w={l.w}>{l.t}</Fit>
          </div>
        ))}
      </div>
    </div>
  );
}

export default function App() {
  return (
    <div className="flex h-[1069px] w-[1792px] overflow-hidden bg-white text-black">
      <Dialog />
      <div className="mt-[161px] ml-[40px] h-[749px] w-[1079px] border border-black pt-[7px] pr-[9px] pl-[7px]">
        <div className={`flex h-[37px] items-center justify-center border border-black pt-[2px] text-[22px] font-bold ${CALIBRI}`}>
          <Fit w={556} className="ml-[-70px]">MAPA DE LOCALIZAÇÃO DO IMÓVEL DE INTERESSE</Fit>
        </div>
        <div className="mt-[9px] flex">
          <div className="w-[745px]">
            <div className={`flex h-[57px] w-[744px] flex-col items-center justify-center border border-black pt-px text-[16.5px] leading-[23px] ${CALIBRI}`}>
              <Fit w={448} className="ml-[-23px]">REGULARIZAÇÃO NÃO ONEROSA - FULANO DA SILVA COSTA</Fit>
              <Fit w={179} className="ml-[-24px]">MAPA Nº2024/7654321</Fit>
            </div>
            <MainMap />
          </div>
          <SideColumn />
        </div>
      </div>
    </div>
  );
}
